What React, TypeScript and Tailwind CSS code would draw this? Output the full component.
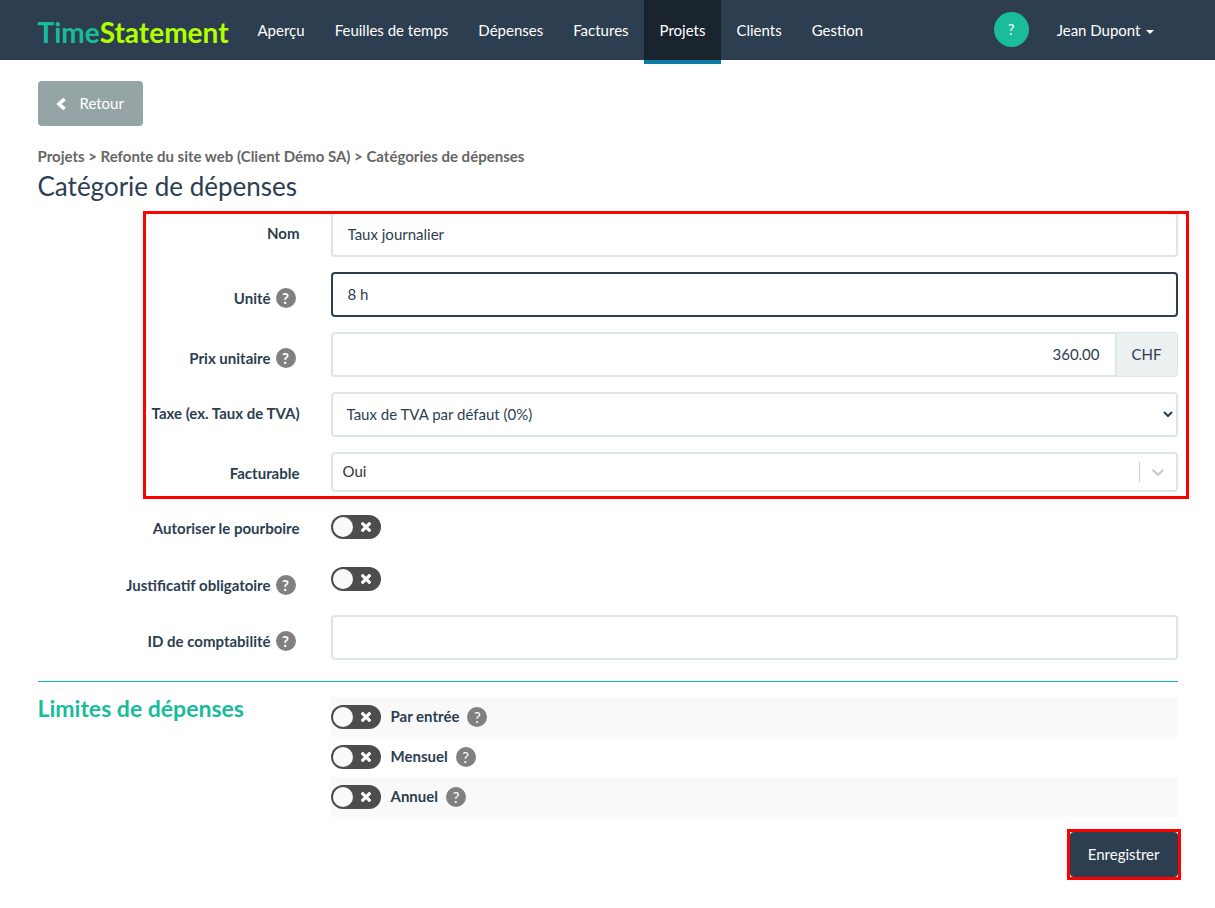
import React from "react";

const navItems = [
  { label: "Aperçu" },
  { label: "Feuilles de temps" },
  { label: "Dépenses" },
  { label: "Factures" },
  { label: "Projets", active: true },
  { label: "Clients" },
  { label: "Gestion" },
];

const limits = [
  { id: "limit-entry", label: "Par entrée" },
  { id: "limit-month", label: "Mensuel" },
  { id: "limit-year", label: "Annuel" },
];

const inputClass =
  "block h-[45px] w-full min-w-0 rounded border-2 border-[#dce4ec] bg-white px-[15px] pb-[2px] text-[#2c3e50] outline-none focus:border-[#2c3e50]";

const HelpIcon = ({ bold = false }: { bold?: boolean }) => (
  <span
    className={`flex h-5 w-5 shrink-0 items-center justify-center rounded-full bg-[#808080] text-white ${
      bold ? "font-bold" : "font-normal"
    }`}
  >
    ?
  </span>
);

const Toggle = ({ id }: { id: string }) => (
  <span className="relative block h-6 w-[50px] shrink-0 rounded-full bg-[#4d4d4d] p-[2px]">
    <span className="flex items-center justify-between pr-2">
      <span className="h-5 w-5 rounded-full bg-[#fafafa]"></span>
      <svg width="10" height="10" viewBox="0 0 10 10">
        <path
          d="M1.8 1.8l6.4 6.4M8.2 1.8L1.8 8.2"
          stroke="white"
          strokeWidth="3.2"
          strokeLinecap="square"
          strokeLinejoin="round"
        />
      </svg>
    </span>
    <input
      id={id}
      type="checkbox"
      className="absolute inset-0 h-full w-full cursor-pointer opacity-0"
    />
  </span>
);

type FieldProps = {
  id: string;
  label: string;
  help?: boolean;
  children: React.ReactNode;
};

const Field = ({ id, label, help, children }: FieldProps) => (
  <div className="grid grid-cols-[262px_1fr] items-start gap-x-[31px]">
    {help ? (
      <div className="flex items-center justify-end gap-[5px] pt-4 pr-1 pb-[5px]">
        <label htmlFor={id} className="font-bold leading-5">
          {label}
        </label>
        <HelpIcon bold />
      </div>
    ) : (
      <label htmlFor={id} className="pt-[11px] pb-[5px] text-right font-bold">
        {label}
      </label>
    )}
    {children}
  </div>
);

const Header = () => (
  <header className="h-[60px] bg-[#2c3e50] text-white">
    <div className="mx-auto flex max-w-[1140px] items-start">
      <a
        href="#"
        className="flex h-[60px] w-[205px] items-center pt-1 text-[28px] font-bold"
      >
        <span className="text-[#18bc9c]">Time</span>
        <span className="text-[#b3ff00]">Statement</span>
      </a>
      <nav className="flex">
        {navItems.map((item) => (
          <a
            key={item.label}
            href="#"
            className={
              item.active
                ? "h-16 border-b-4 border-[#0e7ba6] bg-[#1a242f] px-4 leading-[60px]"
                : "px-[15px] leading-[60px]"
            }
          >
            {item.label}
          </a>
        ))}
      </nav>
      <div className="mr-6 ml-auto flex items-center">
        <button
          type="button"
          className="mt-3 mr-7 h-[35px] w-[35px] self-start rounded-full bg-[#1abc9c]"
        >
          ?
        </button>
        <button type="button" className="flex h-[60px] items-center gap-[5px]">
          Jean Dupont
          <svg width="8" height="4" viewBox="0 0 8 4" className="mt-1">
            <path d="M0 0h8L4 4z" fill="currentColor" />
          </svg>
        </button>
      </div>
    </div>
  </header>
);

const App = () => {
  return (
    <div className="bg-white font-['Lato',sans-serif] text-[15px] leading-[21px] text-[#2c3e50]">
      <Header />

      <main className="mx-auto max-w-[1140px] pt-[21px] pb-7">
        <button
          type="button"
          className="flex h-[45px] w-[105px] items-center gap-[13px] rounded bg-[#95a5a6] pl-[18px] text-white"
        >
          <svg width="11" height="14" viewBox="0 0 11 14">
            <path
              d="M8.5 2L3 7l5.5 5"
              fill="none"
              stroke="currentColor"
              strokeWidth="3.6"
            />
          </svg>
          Retour
        </button>

        <p className="mt-5 font-bold text-[#666]">
          Projets &gt; Refonte du site web (Client Démo SA) &gt; Catégories de
          dépenses
        </p>
        <h1 className="mt-[5px] mb-[11px] text-[26px] leading-[29px]">
          Catégorie de dépenses
        </h1>

        <form>
          {/* Main fields, framed */}
          <div className="relative space-y-[15px]">
            <Field id="name" label="Nom">
              <input
                id="name"
                type="text"
                defaultValue="Taux journalier"
                className={inputClass}
              />
            </Field>
            <Field id="unit" label="Unité" help>
              <input
                id="unit"
                type="text"
                defaultValue="8 h"
                className="block h-[45px] w-full rounded border-2 border-[#2c3e50] bg-white px-[15px] pb-[2px] outline-none"
              />
            </Field>
            <Field id="price" label="Prix unitaire" help>
              <div className="flex">
                <input
                  id="price"
                  type="text"
                  defaultValue="360.00"
                  className="block h-[45px] w-full min-w-0 rounded-l border-2 border-[#dce4ec] bg-white px-[15px] pb-[2px] text-right outline-none"
                />
                <span className="flex items-center rounded-r border border-l-0 border-[#dce4ec] bg-[#ecf0f1] px-[15px]">
                  CHF
                </span>
              </div>
            </Field>
            <Field id="tax" label="Taxe (ex. Taux de TVA)">
              <select
                id="tax"
                className="block h-[45px] w-full rounded border-2 border-[#dce4ec] bg-white px-[10px] pb-[2px] outline-none"
              >
                <option>Taux de TVA par défaut (0%)</option>
              </select>
            </Field>
            <Field id="billable" label="Facturable">
              <div className="flex h-10 items-center rounded border-2 border-[#dce4ec] bg-white">
                <select
                  id="billable"
                  className="h-full flex-1 appearance-none pb-[2px] pl-[10px] text-[#333] outline-none"
                >
                  <option>Oui</option>
                  <option>Non</option>
                </select>
                <span className="h-5 w-px bg-[#ccc]"></span>
                <svg
                  width="20"
                  height="20"
                  viewBox="0 0 20 20"
                  className="mx-2 fill-[#ccc]"
                >
                  <path d="M4.516 7.548c0.436-0.446 1.043-0.481 1.576 0l3.908 3.747 3.908-3.747c0.533-0.481 1.141-0.446 1.574 0 0.436 0.445 0.408 1.197 0 1.615-0.406 0.418-4.695 4.502-4.695 4.502-0.217 0.223-0.502 0.335-0.787 0.335s-0.57-0.112-0.789-0.335c0 0-4.287-4.084-4.695-4.502s-0.436-1.17 0-1.615z" />
                </svg>
              </div>
            </Field>
            <div className="pointer-events-none absolute -top-px -right-[11px] -bottom-[7px] left-[105px] border-3 border-[#f00]"></div>
          </div>

          <div className="mt-[15px] space-y-[15px]">
            <Field id="tip" label="Autoriser le pourboire">
              <div className="pt-2">
                <Toggle id="tip" />
              </div>
            </Field>
            <Field id="receipt" label="Justificatif obligatoire" help>
              <div className="pt-2">
                <Toggle id="receipt" />
              </div>
            </Field>
            <Field id="accounting" label="ID de comptabilité" help>
              <input id="accounting" type="text" className={inputClass} />
            </Field>
          </div>

          {/* Expense limits */}
          <section className="mt-[21px] grid grid-cols-[262px_1fr] gap-x-[31px] border-t border-[#18bc9c] pt-[15px]">
            <h2 className="text-[23px] leading-[23px] font-bold text-[#18bc9c]">
              Limites de dépenses
            </h2>
            <div>
              {limits.map((limit) => (
                <div
                  key={limit.id}
                  className="flex h-10 items-center odd:bg-[#f9f9f9]"
                >
                  <Toggle id={limit.id} />
                  <label
                    htmlFor={limit.id}
                    className="mr-2 ml-[10px] pb-[2px] font-bold"
                  >
                    {limit.label}
                  </label>
                  <HelpIcon />
                </div>
              ))}
            </div>
          </section>

          <div className="mt-[15px] flex justify-end">
            <div className="outline-3 outline-[#f00]">
              <button
                type="button"
                className="block h-[45px] rounded bg-[#2c3e50] px-[18px] text-white"
              >
                Enregistrer
              </button>
            </div>
          </div>
        </form>
      </main>
    </div>
  );
};

export default App;
